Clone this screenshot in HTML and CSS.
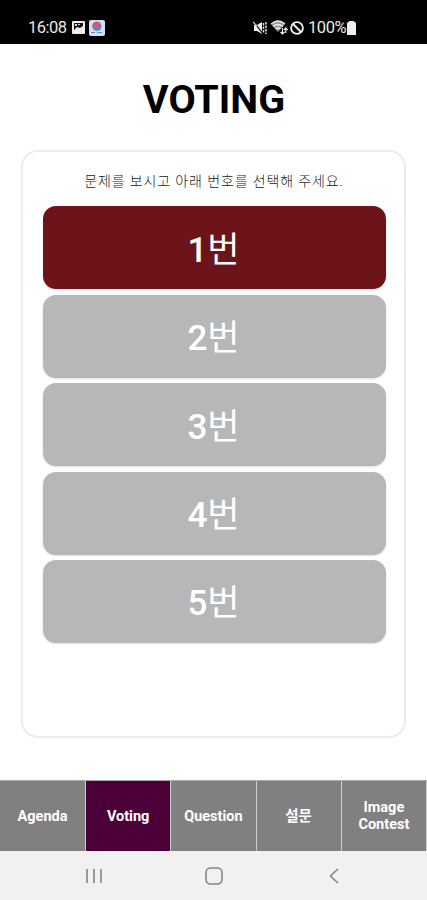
FILE: index.html
```
<!DOCTYPE html>
<html lang="ko">
<head>
  <meta charset="UTF-8">
  <title>Voting</title>
  <link rel="stylesheet" href="styles.css">
</head>
<body>
  <div class="status">
    <span class="time">16:08</span>
    <svg class="picture" width="13" height="13" viewBox="0 0 13 13">
      <rect width="13" height="13" rx="1" fill="#eee"/>
      <path d="M2 2h9v3L8 7 5 6 2 9z" fill="#111"/>
      <path d="M3 3h2v2H3zM6 3h2v1H6z" fill="#ddd"/>
    </svg>
    <svg class="app" width="16" height="16" viewBox="0 0 16 16">
      <rect width="16" height="16" rx="2" fill="#cfe2f3"/>
      <circle cx="8" cy="6.5" r="4.5" fill="#6685bd"/>
      <path d="M3.500 7.500a4.500 4.500 0 0 1 8.500-3C11 8 7 5 3.500 7.500z" fill="#d85470"/>
      <path d="M2 12.500h4M8 12.500h5" stroke="#7289ad"/>
    </svg>
    <svg class="mute" width="14" height="14" viewBox="0 0 14 14">
      <path d="M1 4h3l5-3v12L4 10H1z" fill="#eee"/>
      <path d="M1 1l9 12" stroke="#000" stroke-width="1.200"/>
      <path d="M0 1l4 4" stroke="#ddd" stroke-width="1.200"/>
      <path d="M10.500 2v10M13 1v12" stroke="#ddd" stroke-width="1.500" stroke-dasharray="2.500 1"/>
    </svg>
    <svg class="wifi" width="17" height="15" viewBox="0 0 17 15">
      <path d="M0 4q7-6 14 0L7 12z" fill="#999"/>
      <path d="M0 4q7-6 14 0M2 6.500q5-4 10 0M4.500 9q2.500-2 5 0" fill="none" stroke="#eee" stroke-width="1.300"/>
      <path d="M11.500 8v6M9.500 12l2 2 2-2M14.800 13V8M13 10l1.800-2 1.800 2" fill="none" stroke="#eee" stroke-width="1.200"/>
    </svg>
    <svg class="blocked" width="14" height="14" viewBox="0 0 14 14">
      <circle cx="7" cy="7" r="5.900" fill="none" stroke="#eee" stroke-width="1.900"/>
      <path d="M3 3l8 8" stroke="#eee" stroke-width="1.900"/>
    </svg>
    <span class="percent">100%</span>
    <svg class="battery" width="9" height="14" viewBox="0 0 9 14">
      <path d="M0 2l2.500-2h4L9 2v12H0z" fill="#eee"/>
    </svg>
  </div>

  <h1>VOTING</h1>

  <div class="card">
    <p>문제를 보시고 아래 번호를 선택해 주세요.</p>
    <div class="choices">
      <button class="selected"><b>1</b>번</button>
      <button><b>2</b>번</button>
      <button><b>3</b>번</button>
      <button><b>4</b>번</button>
      <button><b>5</b>번</button>
    </div>
  </div>

  <div class="tabs">
    <div class="tab">Agenda</div>
    <div class="tab active">Voting</div>
    <div class="tab">Question</div>
    <div class="tab">설문</div>
    <div class="tab">Image<br>Contest</div>
  </div>

  <div class="navbar">
    <svg width="18" height="16" viewBox="0 0 18 16">
      <path d="M2 1v14M9 1v14M16 1v14" stroke="#858585" stroke-width="1.600"/>
    </svg>
    <svg width="18" height="18" viewBox="0 0 18 18">
      <rect x="1" y="1" width="16" height="16" rx="4.500" fill="none" stroke="#858585" stroke-width="1.600"/>
    </svg>
    <svg width="18" height="16" viewBox="0 0 18 16">
      <path d="M13 1L5.500 8 13 15" fill="none" stroke="#858585" stroke-width="1.600"/>
    </svg>
  </div>
</body>
</html>
```
FILE: styles.css
```
* {
  box-sizing: border-box;
}

body {
  margin: 0;
  height: 900px;
  display: flex;
  flex-direction: column;
  background: #fff;
  font-family: Roboto, "Noto Sans CJK KR", sans-serif;
  overflow: hidden;
}

.status {
  height: 44px;
  padding: 11px 71px 0 28px;
  display: flex;
  align-items: center;
  background: #000;
  color: #e8e8e8;
  font-size: 16.5px;
}

.time {
  width: 44px;
  letter-spacing: -0.5px;
}

.app {
  margin-left: 4px;
}

.mute {
  margin-left: auto;
}

.wifi {
  margin-left: 4px;
}

.blocked {
  margin-left: 2px;
}

.percent {
  margin-left: 4px;
  width: 39px;
  letter-spacing: -0.4px;
}

h1 {
  margin: 32px 0 0;
  height: 48px;
  line-height: 48px;
  font-size: 39.5px;
  text-align: center;
  text-indent: 1px;
  color: #000;
}

.card {
  margin: 26px 21px 0;
  height: 588px;
  padding: 19px 18.5px 0 19.5px;
  border: 2px solid #ececec;
  border-radius: 17px;
}

.card p {
  margin: 0 0 15.4px;
  height: 20px;
  line-height: 20px;
  font-size: 14px;
  font-weight: 300;
  letter-spacing: 0.87px;
  text-align: center;
  color: #222;
}

.choices {
  display: flex;
  flex-direction: column;
  gap: 5.4px;
}

.choices button {
  height: 83px;
  padding: 0 1px 3px 0;
  border: none;
  border-radius: 13px;
  background: #b7b7b7;
  color: #fff;
  font-family: inherit;
  font-size: 35px;
  box-shadow: 0 1px 2px #ddd;
}

.choices b {
  font-weight: 500;
}

.choices .selected {
  background: #6d141a;
}

.tabs {
  margin-top: 41.6px;
  height: 71px;
  display: flex;
  background: #808080;
  border-top: 1px solid #aaa;
}

.tab {
  flex: 1;
  padding-top: 1px;
  display: flex;
  align-items: center;
  justify-content: center;
  border-right: 1px solid #ccc;
  color: #fff;
  font-size: 14.5px;
  line-height: 17px;
  font-weight: bold;
  text-align: center;
}

.tab:first-child {
  flex: 0 0 86px;
}

.active {
  background: #4b0038;
}

.navbar {
  flex: 1;
  display: flex;
  align-items: center;
  padding: 1px 84px 0 85px;
  justify-content: space-between;
  background: #f1f1f1;
}
```
